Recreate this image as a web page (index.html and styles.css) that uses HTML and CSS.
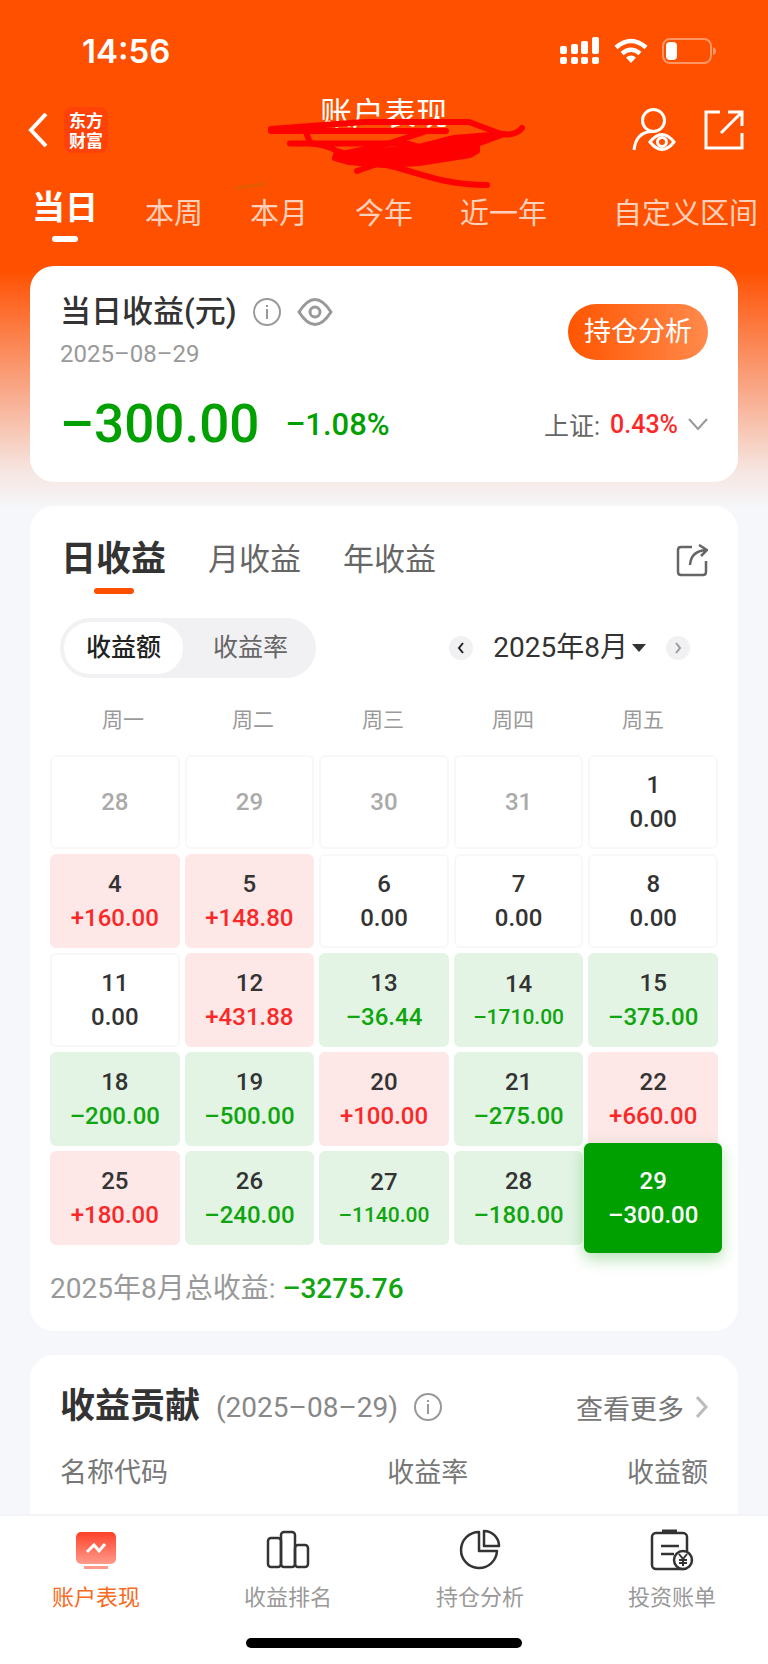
FILE: index.html
```html
<!DOCTYPE html>
<html lang="zh-CN">
<head>
<meta charset="utf-8">
<meta name="viewport" content="width=device-width, initial-scale=1">
<title>账户表现</title>
<link rel="stylesheet" href="styles.css">
</head>
<body>
<div class="page">
  <div class="status">
    <span class="time">14:56</span>
    <div class="status-icons">
      <svg width="40" height="28" viewBox="0 0 40 28" fill="#fff"><rect x="0" y="9" width="7" height="8" rx="2"/><rect x="11" y="7" width="7" height="10" rx="2"/><rect x="21" y="4" width="7" height="13" rx="2"/><rect x="32" y="0" width="7" height="17" rx="2"/><rect x="0" y="20" width="7" height="7" rx="2"/><rect x="11" y="20" width="7" height="7" rx="2"/><rect x="21" y="20" width="7" height="7" rx="2"/><rect x="32" y="20" width="7" height="7" rx="2"/></svg>
      <svg width="34" height="26" viewBox="0 0 34 26" fill="none" stroke="#fff" stroke-width="4.500"><path d="M2 9.500Q17-3.500 32 9.500"/><path d="M8 15.500Q17 8 26 15.500"/><path d="M12 19.500Q17 15.500 22 19.500L17 25Z" fill="#fff" stroke="none"/></svg>
      <svg width="54" height="26" viewBox="0 0 54 26"><rect x="1" y="1" width="48" height="24" rx="7" fill="none" stroke="#fff" stroke-opacity=".4" stroke-width="2"/><rect x="4" y="4" width="11" height="18" rx="4" fill="#fff"/><path d="M51 9q3 1 3 4t-3 4z" fill="#fff" opacity=".4"/></svg>
    </div>
  </div>

  <header class="header">
    <button class="icon-btn" aria-label="返回"><svg width="20" height="34" viewBox="0 0 20 34" fill="none" stroke="#fff" stroke-width="4"><path d="M18 1L3 17L18 33"/></svg></button>
    <a class="logo" href="#"><span>东方</span><span>财富</span></a>
    <div class="title-wrap">
      <h1 class="title">账户表现</h1>
      <svg class="scribble" width="270" height="76" viewBox="263 116 270 76" fill="none" stroke="#f00" stroke-width="6" stroke-linecap="round" stroke-linejoin="round"><path d="M272 129L365 122H470L502 134Q517 136 523 128"/><path d="M272 131L447 131"/><path d="M307 132L311 143"/><path d="M291 143.500H408L420 147"/><path d="M310 143Q332 146 337 151L358 157M425 132L385 145L348 153M358 171L395 158"/><path d="M337 155L372 152L420 147L455 138L505 134L478 144L478 151L471 155L420 163L385 165L350 162L336 158Z" fill="#f00"/><path d="M382 164C415 170 440 185 488 185"/></svg>
    </div>
    <button class="icon-btn person" aria-label="账户查看"><svg width="44" height="44" viewBox="0 0 44 44" fill="none" stroke="#fff" stroke-width="3"><circle cx="21.500" cy="12.500" r="11"/><path d="M2 42Q4 24 20 23.500"/><path d="M18 34Q30 19 42 34Q30 49 18 34Z"/><circle cx="30" cy="34" r="4.500"/></svg></button>
    <button class="icon-btn" aria-label="分享"><svg width="40" height="40" viewBox="0 0 40 40" fill="none" stroke="#fff" stroke-width="3"><path d="M16 2H2V38H38V23M24 2H38V16M38 2L17 23"/></svg></button>
  </header>

  <nav class="periods">
    <button class="period active">当日</button>
    <button class="period">本周</button>
    <button class="period">本月</button>
    <button class="period">今年</button>
    <button class="period">近一年</button>
    <button class="period last">自定义区间</button>
    <svg class="mark" width="32" height="8" viewBox="0 0 32 8"><path d="M1 6L31 2" stroke="#e85a00" stroke-width="4"/></svg>
  </nav>

  <main class="main">
    <section class="card summary">
      <div class="row">
        <div>
          <div class="summary-title">
            <h2>当日收益(元)</h2>
            <svg width="28" height="28" viewBox="0 0 28 28" fill="none" stroke="#999" stroke-width="2"><circle cx="14" cy="14" r="13"/><path d="M14 11V21M14 7V9"/></svg>
            <svg width="36" height="28" viewBox="0 0 36 28" fill="none" stroke="#999" stroke-width="3"><path d="M2 14Q18-11 34 14Q18 39 2 14Z"/><circle cx="18" cy="14" r="5"/></svg>
          </div>
          <p class="date">2025–08–29</p>
        </div>
        <button class="pill">持仓分析</button>
      </div>
      <div class="row figures">
        <div class="figure"><strong>–300.00</strong><span>–1.08%</span></div>
        <button class="index">上证: <b>0.43%</b><svg width="20" height="12" viewBox="0 0 20 12" fill="none" stroke="#999" stroke-width="2"><path d="M1 1L10 11L19 1"/></svg></button>
      </div>
    </section>

    <section class="card calendar">
      <div class="row cal-head">
        <div class="cal-tabs">
          <button class="cal-tab active">日收益</button>
          <button class="cal-tab">月收益</button>
          <button class="cal-tab">年收益</button>
        </div>
        <button class="icon-btn" aria-label="分享收益"><svg width="32" height="33" viewBox="0 0 32 33" fill="none" stroke="#666" stroke-width="2.500"><path d="M16 3H5Q2 3 2 6V28Q2 31 5 31H27Q30 31 30 28V17"/><path d="M14 21Q15 7 30 6M23 1L31 6L25 12"/></svg></button>
      </div>
      <div class="row cal-tools">
        <div class="segment">
          <button class="seg active">收益额</button>
          <button class="seg">收益率</button>
        </div>
        <div class="month">
          <button class="round" aria-label="上个月"><svg width="8" height="12" viewBox="0 0 8 12" fill="none" stroke="#222" stroke-width="2"><path d="M6 1L2 6L6 11"/></svg></button>
          <button class="month-name">2025年8月<svg width="14" height="8" viewBox="0 0 14 8"><path d="M0 0H14L7 8Z" fill="#333"/></svg></button>
          <button class="round" aria-label="下个月"><svg width="8" height="12" viewBox="0 0 8 12" fill="none" stroke="#999" stroke-width="2"><path d="M2 1L6 6L2 11"/></svg></button>
        </div>
      </div>
      <div class="weekdays"><span>周一</span><span>周二</span><span>周三</span><span>周四</span><span>周五</span></div>
      <div class="days">
        <button class="day out">28</button><button class="day out">29</button><button class="day out">30</button><button class="day out">31</button><button class="day">1<span>0.00</span></button>
        <button class="day up">4<span>+160.00</span></button><button class="day up">5<span>+148.80</span></button><button class="day">6<span>0.00</span></button><button class="day">7<span>0.00</span></button><button class="day">8<span>0.00</span></button>
        <button class="day">11<span>0.00</span></button><button class="day up">12<span>+431.88</span></button><button class="day down">13<span>–36.44</span></button><button class="day down long">14<span>–1710.00</span></button><button class="day down">15<span>–375.00</span></button>
        <button class="day down">18<span>–200.00</span></button><button class="day down">19<span>–500.00</span></button><button class="day up">20<span>+100.00</span></button><button class="day down">21<span>–275.00</span></button><button class="day up">22<span>+660.00</span></button>
        <button class="day up">25<span>+180.00</span></button><button class="day down">26<span>–240.00</span></button><button class="day down long">27<span>–1140.00</span></button><button class="day down">28<span>–180.00</span></button><button class="day selected">29<span>–300.00</span></button>
      </div>
      <p class="total">2025年8月总收益: <b>–3275.76</b></p>
    </section>

    <section class="card contrib">
      <div class="row contrib-head">
        <div class="contrib-title">
          <h2>收益贡献</h2>
          <span>(2025–08–29)</span>
          <svg width="28" height="28" viewBox="0 0 28 28" fill="none" stroke="#999" stroke-width="2"><circle cx="14" cy="14" r="13"/><path d="M14 11V21M14 7V9"/></svg>
        </div>
        <a class="more" href="#">查看更多<svg width="12" height="22" viewBox="0 0 12 22" fill="none" stroke="#bbb" stroke-width="3"><path d="M1 1L10 11L1 21"/></svg></a>
      </div>
      <table class="table">
        <thead><tr><th>名称代码</th><th>收益率</th><th>收益额</th></tr></thead>
      </table>
    </section>
  </main>

  <footer class="tabbar">
    <nav class="tabs">
      <a class="tab active" href="#"><svg width="44" height="44" viewBox="0 0 44 44"><defs><linearGradient id="g" x1="0" y1="0" x2="0" y2="1"><stop offset="0" stop-color="#ff4228"/><stop offset="1" stop-color="#ff9a8b"/></linearGradient></defs><rect x="2" y="4" width="40" height="32" rx="5" fill="url(#g)"/><path d="M13 24L20 17L25 23L31 16" fill="none" stroke="#fff" stroke-width="3"/><path d="M10 39.500H34" stroke="#ff9a8b" stroke-width="3"/></svg>账户表现</a>
      <a class="tab" href="#"><svg width="44" height="44" viewBox="0 0 44 44" fill="none" stroke="#333" stroke-width="2.500"><rect x="2" y="10" width="13" height="29" rx="3"/><rect x="15" y="4" width="14" height="35" rx="3"/><rect x="29" y="17" width="13" height="22" rx="3"/></svg>收益排名</a>
      <a class="tab" href="#"><svg width="44" height="44" viewBox="0 0 44 44" fill="none" stroke="#333" stroke-width="2.500" stroke-linejoin="round"><path d="M21 4A18 18 0 1 0 39 23H21Z"/><path d="M26 3A15 15 0 0 1 41 18H26Z"/></svg>持仓分析</a>
      <a class="tab" href="#"><svg width="44" height="44" viewBox="0 0 44 44" fill="none" stroke="#333" stroke-width="2.500"><rect x="2" y="5" width="35" height="36" rx="4"/><path d="M12 3H27" stroke-width="3"/><path d="M11 18H29M11 26H24"/><circle cx="33" cy="32" r="9" fill="#fff"/><path d="M29 26L33 31L37 26M33 31V38M29 32H37M29 35H37" stroke-width="2"/></svg>投资账单</a>
    </nav>
    <div class="home"></div>
  </footer>
</div>
</body>
</html>
```

FILE: styles.css
```css
* { box-sizing: border-box; margin: 0; padding: 0; }
body {
  font-family: Roboto, "Noto Sans CJK SC", sans-serif;
  color: #333;
  background: #f6f7fa;
}
button { font: inherit; color: inherit; background: none; border: 0; cursor: pointer; }
a { color: inherit; text-decoration: none; }
svg { display: block; flex: none; }

.page {
  min-height: 100vh;
  display: flex;
  flex-direction: column;
  background: linear-gradient(#ff5000 0, #ff5000 270px, #f9a888 390px, #f6e5e0 470px, #f6f7fa 508px);
}
.row { display: flex; align-items: center; justify-content: space-between; }

.status {
  height: 100px;
  padding: 2px 52px 0 82px;
  display: flex;
  align-items: center;
  justify-content: space-between;
}
.time { font: 600 33px/40px Inter, sans-serif; color: #fff; }
.status-icons { display: flex; align-items: center; gap: 14px; }

.header {
  height: 60px;
  padding: 0 24px 0 28px;
  display: flex;
  align-items: center;
}
.logo {
  margin-left: 16px;
  padding: 3px 5px;
  border-radius: 8px;
  background: #ff4208;
  color: #fff;
  font: 700 17px/20px "Noto Sans CJK SC", sans-serif;
}
.logo span { display: block; }
.title-wrap { position: relative; flex: 1; align-self: flex-start; display: flex; justify-content: center; padding-left: 28px; }
.title { font-size: 32px; line-height: 28px; font-weight: 400; color: #fff; }
.scribble { position: absolute; top: 16px; left: 154px; }
.person { margin-right: 28px; }

.periods {
  position: relative;
  height: 106px;
  padding: 24px 10px 0 32px;
  display: flex;
  align-items: flex-start;
  gap: 47px;
}
.period { font-size: 29px; line-height: 60px; color: #ffd0bc; white-space: nowrap; }
.period.active { font-size: 33px; line-height: 48px; font-weight: 700; color: #fff; }
.period.active::after { content: ""; display: block; width: 26px; height: 6px; margin: 4px auto 0; border-radius: 3px; background: #fff; }
.period.last { margin-left: auto; }
.mark { position: absolute; left: 234px; top: 22px; }

.main { flex: 1; padding: 0 30px; display: flex; flex-direction: column; gap: 24px; }
.card { background: #fff; border-radius: 24px; }

.summary { padding: 24px 30px 22px; }
.summary-title { display: flex; align-items: center; gap: 16px; }
.summary-title h2 { font-size: 31px; line-height: 44px; font-weight: 500; }
.date { font-size: 24px; line-height: 40px; color: #999; }
.pill {
  padding: 0 16px;
  border-radius: 28px;
  font-size: 27px;
  line-height: 56px;
  color: #fff;
  background: linear-gradient(90deg, #ff5500, #ff8a4c);
}
.figures { margin-top: 14px; }
.figure { display: flex; align-items: center; gap: 26px; color: #00a000; }
.figure strong { font-size: 53px; line-height: 72px; font-weight: 500; }
.figure span { font-size: 31px; font-weight: 500; }
.index { display: flex; align-items: center; gap: 10px; font-size: 25px; color: #666; }
.index b { font-weight: 500; color: #fa2828; }

.calendar { padding: 26px 20px 22px; }
.cal-head { padding: 0 10px 0 11px; align-items: flex-start; }
.cal-head .icon-btn { padding-top: 12px; }
.cal-tabs { display: flex; gap: 42px; }
.cal-tab { font-size: 31px; line-height: 56px; color: #666; display: flex; flex-direction: column; align-items: center; }
.cal-tab.active { font-size: 35px; font-weight: 700; color: #333; }
.cal-tab.active::after { content: ""; width: 40px; height: 6px; border-radius: 3px; background: #ff5000; }
.cal-tools { margin-top: 24px; padding: 0 28px 0 10px; }
.segment { display: flex; padding: 4px; border-radius: 30px; background: #f1f1f4; }
.seg { padding: 0 22px; border-radius: 26px; font-size: 25px; line-height: 52px; color: #666; }
.seg.active { background: #fff; color: #222; font-weight: 500; }
.seg + .seg { padding: 0 24px 0 30px; }
.month { display: flex; align-items: center; gap: 20px; }
.round { width: 24px; height: 24px; border-radius: 50%; background: #f1f1f4; display: flex; align-items: center; justify-content: center; }
.month-name { display: flex; align-items: center; gap: 4px; font-size: 28px; line-height: 40px; }
.weekdays { margin: 26px 10px 19px 8px; display: grid; grid-template-columns: repeat(5, 1fr); text-align: center; font-size: 21px; line-height: 32px; color: #999; }
.days { display: grid; grid-template-columns: repeat(5, 1fr); grid-auto-rows: 94px; gap: 5px; }
.day {
  border: 2px solid #f8f8fa;
  border-radius: 6px;
  display: flex;
  flex-direction: column;
  align-items: center;
  justify-content: center;
  font-size: 24px;
  line-height: 34px;
  font-weight: 500;
}
.day.out { color: #aaa; }
.day.up { background: #fde7e7; border-color: #fde7e7; }
.day.up span { color: #fa2828; }
.day.down { background: #e3f4e4; border-color: #e3f4e4; }
.day.down span { color: #0fa50f; }
.day.long span { font-size: 21px; line-height: 32px; }
.day.selected { margin: -8px -4px; background: #00a000; border-color: #00a000; color: #fff; box-shadow: 0 6px 16px rgba(0, 160, 0, .3); }
.total { margin-top: 24px; font-size: 28px; line-height: 40px; color: #999; }
.total b { font-weight: 500; color: #0fa50f; }

.contrib { flex: 1; padding: 28px 30px 16px; border-radius: 24px 24px 0 0; }
.contrib-title { display: flex; align-items: center; gap: 16px; font-size: 28px; color: #888; }
.contrib-title h2 { font-size: 35px; line-height: 48px; font-weight: 700; color: #333; }
.more { display: flex; align-items: center; gap: 12px; font-size: 27px; color: #777; }
.table { width: 100%; margin-top: 20px; border-collapse: collapse; table-layout: fixed; }
.table th { font-size: 27px; line-height: 44px; font-weight: 400; color: #777; text-align: left; }
.table th:nth-child(1) { width: 30%; }
.table th:nth-child(2) { width: 33%; text-align: right; }
.table th:nth-child(3) { text-align: right; }

.tabbar { background: #fff; border-top: 2px solid #f3f4f6; padding: 12px 0 16px; }
.tabs { display: grid; grid-template-columns: repeat(4, 1fr); }
.tab { display: flex; flex-direction: column; align-items: center; gap: 10px; font-size: 22px; line-height: 32px; color: #999; }
.tab.active { color: #f86a1c; }
.home { width: 36%; height: 10px; margin: 24px auto 0; border-radius: 5px; background: #000; }
```
